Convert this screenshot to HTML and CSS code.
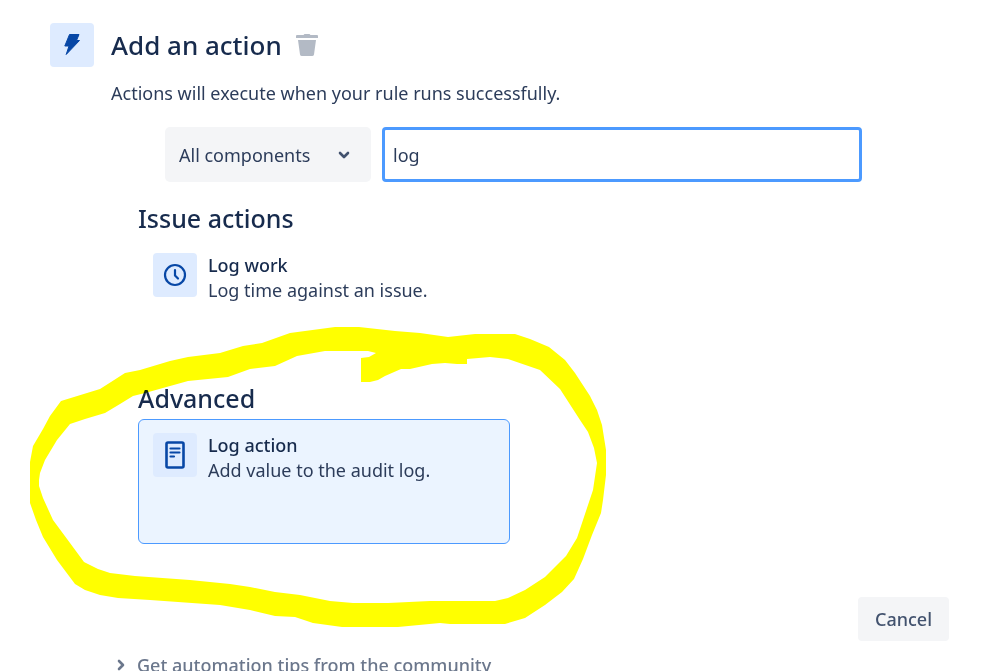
FILE: index.html
```html
<!DOCTYPE html>
<html lang="en">
<head>
<meta charset="utf-8">
<meta name="viewport" content="width=device-width, initial-scale=1">
<title>Add an action</title>
<link rel="stylesheet" href="styles.css">
</head>
<body>
<main class="panel">
  <span class="tile">
    <svg width="24" height="24" viewBox="0 0 24 24" aria-hidden="true"><path d="M9.500 1.500h9.500l-2.500 6h3L6.200 21.500 9 13H4.800z" fill="#0747a6" stroke="#0747a6" stroke-linejoin="round"/></svg>
  </span>
  <div class="content">
    <header class="heading">
      <h1>Add an action</h1>
      <button class="delete" type="button" aria-label="Delete">
        <svg width="22" height="22" viewBox="0 0 22 22" aria-hidden="true"><path d="M1 1h6.500L8.500 0h5l1 1H21q1 0 1 1v2H0V2q0-1 1-1zM2 6h18l-2 14.500q-.3 1.500-2 1.500H6q-1.700 0-2-1.500z" fill="#b3bac5"/></svg>
      </button>
    </header>
    <p class="intro">Actions will execute when your rule runs successfully.</p>
    <form class="filters">
      <div class="select">
        <select aria-label="Components"><option>All components</option></select>
        <svg class="chevron" width="12" height="8" viewBox="0 0 12 8" aria-hidden="true"><path d="M2 2l4 4 4-4" fill="none" stroke="#42526e" stroke-width="2.600" stroke-linecap="round" stroke-linejoin="round"/></svg>
      </div>
      <input class="search" type="text" aria-label="Search actions" value="log">
    </form>
    <section class="group">
      <h2>Issue actions</h2>
      <button class="card" type="button">
        <span class="tile">
          <svg width="24" height="24" viewBox="0 0 24 24" aria-hidden="true"><g fill="none" stroke="#0747a6" stroke-linecap="round" stroke-linejoin="round"><circle cx="12" cy="12" r="10" stroke-width="2.200"/><path d="M12 7v5.500l3 3" stroke-width="2.200"/></g></svg>
        </span>
        <span class="label"><strong>Log work</strong><span>Log time against an issue.</span></span>
      </button>
    </section>
    <section class="group">
      <h2>Advanced</h2>
      <button class="card selected" type="button">
        <span class="tile">
          <svg width="20" height="28" viewBox="0 0 20 28" aria-hidden="true"><g fill="none" stroke="#0747a6" stroke-linecap="round"><rect x="1.500" y="1.500" width="17" height="25" rx="1.500" stroke-width="2.600"/><path d="M5.500 7.500h9M5.500 11.500h9M5.500 15.500h3.500" stroke-width="2.200"/></g></svg>
        </span>
        <span class="label"><strong>Log action</strong><span>Add value to the audit log.</span></span>
      </button>
    </section>
  </div>
</main>
<footer class="footer">
  <button class="cancel" type="button">Cancel</button>
  <a class="tips" href="#tips">
    <svg width="8" height="12" viewBox="0 0 8 12" aria-hidden="true"><path d="M2 2l4 4-4 4" fill="none" stroke="#6b778c" stroke-width="2.600" stroke-linecap="round" stroke-linejoin="round"/></svg>
    Get automation tips from the community
  </a>
</footer>
<svg class="marker" width="998" height="671" viewBox="0 0 998 671" aria-hidden="true">
  <path fill="#ff0" fill-rule="evenodd" d="M30 490V462L33 446 43 429 50 416 61 401 100 389 111 382 125 373 140 370 170 361 188 357 220 353 243 346 262 343 290 333 320 329 335 327H359L395 331 420 333 448 337 475 334H515L530 339 549 347 565 360 575 373 590 396 597 410 602 425 606 450V475L603 500 601 513 592 535 583 559 574 579 562 592 545 605 525 618 505 624H450L440 623 398 627H342L313 623 295 617 275 616 250 610 220 605 150 600 118 598 100 595 85 590 75 584 57 560 43 537 36 520 30 503ZM39 480L40 473 45 460 57 440 70 424 85 419 105 413 120 404 133 396 145 393 188 381 228 377 250 369 275 366 297 356 325 351H368L376 353 369 357 361 358V382H370L378 380 385 376 401 369H410L432 364 445 363 457 364H467V359L490 357 508 359 540 370 560 389 580 420 588 432 594 448 597 463 593 490 588 505 577 538 566 556 545 577 525 590 508 598 495 601H430L388 603H353L330 601 310 597 300 595 275 592 250 587 230 584 190 580 135 576 110 573 98 569 84 562 70 543 53 520 43 498 39 486Z"/>
</svg>
</body>
</html>
```
FILE: styles.css
```css
* {
  box-sizing: border-box;
}

body {
  margin: 0;
  background: #fff;
  color: #2c3c5a;
  font: 18px/24px "Noto Sans", sans-serif;
  overflow-x: hidden;
}

button,
input,
select {
  font: inherit;
  color: inherit;
}

.panel {
  display: flex;
  gap: 17px;
  padding: 23px 50px 0;
}

.content {
  flex: 1;
}

.tile {
  display: flex;
  flex: none;
  align-items: center;
  justify-content: center;
  width: 44px;
  height: 44px;
  border-radius: 4px;
  background: #deebff;
}

.heading {
  display: flex;
  align-items: center;
  gap: 14px;
  height: 44px;
}

h1,
h2 {
  margin: 0;
  color: #172b4d;
  font-weight: 500;
  line-height: 32px;
}

h1 {
  font-size: 26px;
}

h2 {
  font-size: 25px;
}

.delete {
  display: flex;
  padding: 0;
  border: 0;
  background: none;
}

.intro {
  margin: 14px 0 22px;
}

.filters {
  display: flex;
  gap: 11px;
  margin: 0 86px 20px 54px;
}

.select {
  position: relative;
  flex: none;
  width: 206px;
}

.select select {
  width: 100%;
  height: 55px;
  padding: 0 14px;
  border: 0;
  border-radius: 5px;
  background: #f4f5f7;
  appearance: none;
}

.chevron {
  position: absolute;
  top: 24px;
  right: 21px;
  pointer-events: none;
}

.search {
  flex: 1;
  min-width: 0;
  height: 55px;
  padding: 0 8px;
  border: 3px solid #4c9aff;
  border-radius: 4px;
  outline: 0;
}

.group {
  margin-left: 27px;
}

.card {
  display: flex;
  align-items: flex-start;
  gap: 11px;
  width: 372px;
  height: 125px;
  margin: 5px 0 18px;
  padding: 13px 14px;
  border: 1px solid transparent;
  border-radius: 6px;
  background: none;
  line-height: 25px;
  text-align: left;
}

.selected {
  border-color: #4c9aff;
  background: #ebf4ff;
}

.label {
  display: flex;
  flex-direction: column;
}

.label strong {
  color: #172b4d;
  font-weight: 500;
}

.footer {
  display: flex;
  flex-direction: column;
  gap: 12px;
  padding: 35px 49px 0 117px;
}

.cancel {
  align-self: flex-end;
  height: 44px;
  padding: 0 17px;
  border: 0;
  border-radius: 4px;
  background: #f4f5f7;
  color: #42526e;
  font-weight: 500;
}

.tips {
  display: flex;
  align-items: center;
  gap: 12px;
  color: #6b778c;
  font-weight: 500;
  text-decoration: none;
}

.marker {
  position: absolute;
  top: 0;
  left: 0;
  mix-blend-mode: multiply;
  pointer-events: none;
}
```
